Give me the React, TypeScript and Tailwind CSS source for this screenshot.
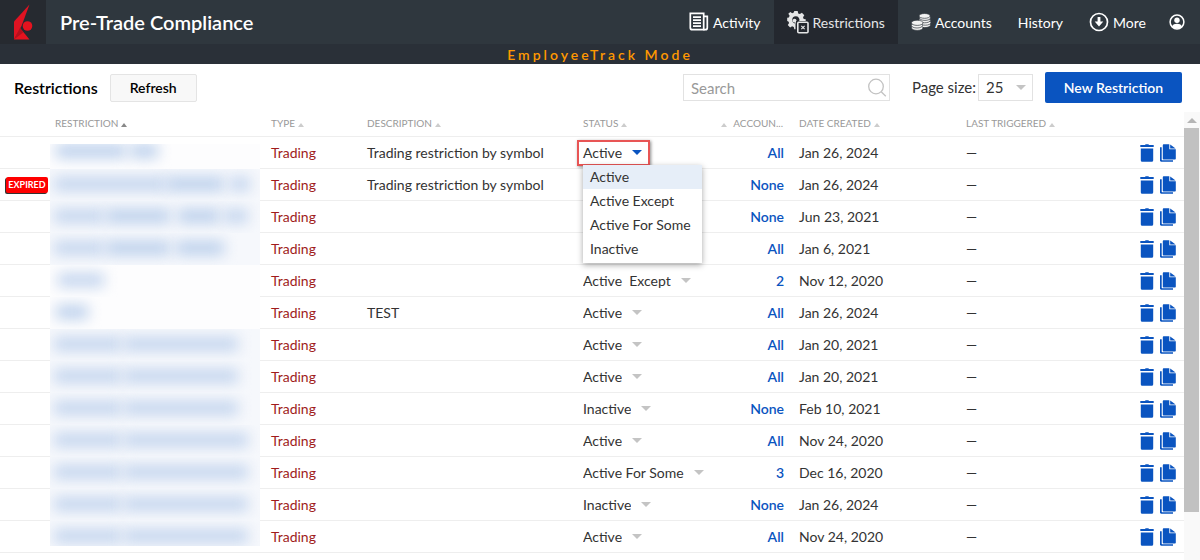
import type { ReactNode } from "react";

type Status = "Active" | "Active Except" | "Active\u00a0 Except" | "Active For Some" | "Inactive";

type Bar = { left: number; width: number; dark?: boolean };

type Restriction = {
  id: number;
  expired?: boolean;
  open?: boolean;
  sparse?: boolean;
  bars: Bar[];
  description: string;
  status: Status;
  accounts: string;
  created: string;
};

const statuses: Status[] = ["Active", "Active Except", "Active For Some", "Inactive"];

// restriction names are redacted, each one is drawn as a few blurred bars
const shortBars: Bar[] = [
  { left: 4, width: 68 },
  { left: 74, width: 114 },
];

const longBars: Bar[] = [
  { left: 4, width: 68 },
  { left: 74, width: 124 },
];

const rows: Restriction[] = [
  { id: 1, open: true, bars: [{ left: 6, width: 70, dark: true }, { left: 80, width: 28, dark: true }], description: "Trading restriction by symbol", status: "Active", accounts: "All", created: "Jan 26, 2024" },
  { id: 2, expired: true, bars: [{ left: 4, width: 112 }, { left: 116, width: 58, dark: true }, { left: 180, width: 20 }], description: "Trading restriction by symbol", status: "Active", accounts: "None", created: "Jan 26, 2024" },
  { id: 3, bars: [{ left: 4, width: 50 }, { left: 56, width: 64, dark: true }, { left: 128, width: 42, dark: true }, { left: 174, width: 24 }], description: "", status: "Active", accounts: "None", created: "Jun 23, 2021" },
  { id: 4, bars: [{ left: 4, width: 50 }, { left: 56, width: 64, dark: true }, { left: 126, width: 48, dark: true }], description: "", status: "Active", accounts: "All", created: "Jan 6, 2021" },
  { id: 5, sparse: true, bars: [{ left: 8, width: 46 }], description: "", status: "Active\u00a0 Except", accounts: "2", created: "Nov 12, 2020" },
  { id: 6, sparse: true, bars: [{ left: 6, width: 32, dark: true }], description: "TEST", status: "Active", accounts: "All", created: "Jan 26, 2024" },
  { id: 7, bars: shortBars, description: "", status: "Active", accounts: "All", created: "Jan 20, 2021" },
  { id: 8, bars: shortBars, description: "", status: "Active", accounts: "All", created: "Jan 20, 2021" },
  { id: 9, bars: shortBars, description: "", status: "Inactive", accounts: "None", created: "Feb 10, 2021" },
  { id: 10, bars: longBars, description: "", status: "Active", accounts: "All", created: "Nov 24, 2020" },
  { id: 11, bars: longBars, description: "", status: "Active For Some", accounts: "3", created: "Dec 16, 2020" },
  { id: 12, bars: longBars, description: "", status: "Inactive", accounts: "None", created: "Jan 26, 2024" },
  { id: 13, bars: longBars, description: "", status: "Active", accounts: "All", created: "Nov 24, 2020" },
];

function Logo() {
  return (
    <svg className="h-9 w-5" viewBox="0 0 20 36" aria-hidden="true">
      <path d="M16.500 0.500 1 17.500v18L8.500 22z" fill="#e01322" />
      <path d="M1 35.500 7 24 16.500 35.500z" fill="#e5131f" />
      <path d="M1 35.500 7 24 10.500 28.200z" fill="#b5101d" />
      <circle cx="14.500" cy="22" r="4.800" fill="#e5131f" />
    </svg>
  );
}

function NewsIcon() {
  return (
    <svg className="h-5 w-5" viewBox="0 0 20 20" fill="none" stroke="#fff" strokeWidth="1.700" aria-hidden="true">
      <path d="M1.300 1.300h13.400v16.400H3.300a2 2 0 0 1-2-2z" />
      <path d="M14.700 4.300h3.600v11.400a2 2 0 0 1-2 2h-2" />
      <path d="M4 5.200h8M4 8.200h8M4 11.200h8M4 14.200h8" />
    </svg>
  );
}

function GearIcon() {
  return (
    <svg className="h-6 w-[22px]" viewBox="0 0 22 24" aria-hidden="true">
      <path
        fill="#e4e5e6"
        fillRule="evenodd"
        d="M7.300 1h3.400l.5 2.400 1.700.7 2-1.300 2.400 2.400-1.300 2 .7 1.700 2 .4v1.700H9.500v-.6a1.900 1.900 0 1 0-1.900 2.100h.9v6.800l-1.200-.1-.5-2.300-1.700-.7-2 1.300L.8 15.100l1.300-2-.7-1.700L.200 11V7.700l1.700-.3.700-1.700-1.300-2L3.300 2l1.900 1.300 1.600-.7zM8.800 6.300a3.600 3.600 0 1 0 .2 7.200V11h3.300a3.600 3.600 0 0 0-3.500-4.700z"
      />
      <rect x="10.800" y="12.300" width="10.200" height="10.400" rx="1" fill="#24282f" stroke="#e4e5e6" strokeWidth="1.600" />
      <path d="m14.300 15.900 3.300 3.300m0-3.300-3.300 3.300" stroke="#e4e5e6" strokeWidth="1.200" />
    </svg>
  );
}

function CoinsIcon() {
  return (
    <svg className="h-[18px] w-5" viewBox="0 0 20 18" aria-hidden="true">
      <g fill="#f2f2f2" stroke="#2f373e" strokeWidth="0.700">
        <ellipse cx="13.800" cy="12" rx="5.800" ry="2.600" />
        <ellipse cx="14.300" cy="9.600" rx="5.600" ry="2.600" />
        <ellipse cx="13.600" cy="7.200" rx="5.800" ry="2.600" />
        <ellipse cx="14" cy="4.800" rx="5.600" ry="2.600" />
        <ellipse cx="13.600" cy="2.900" rx="5.600" ry="2.400" />
        <ellipse cx="6.200" cy="14.800" rx="5.800" ry="2.600" />
        <ellipse cx="6" cy="12.400" rx="5.600" ry="2.600" />
        <ellipse cx="6.200" cy="9.800" rx="5.800" ry="2.600" />
      </g>
    </svg>
  );
}

function DownCircleIcon() {
  return (
    <svg className="h-5 w-5" viewBox="0 0 20 20" aria-hidden="true">
      <circle cx="10" cy="10" r="8.500" fill="none" stroke="#fff" strokeWidth="1.700" />
      <path d="M8.600 5h2.800v4.600h2.900L10 14.600 5.700 9.600h2.900z" fill="#fff" />
    </svg>
  );
}

function UserIcon() {
  return (
    <svg className="h-4 w-4" viewBox="0 0 16 16" aria-hidden="true">
      <circle cx="8" cy="8" r="6.900" fill="none" stroke="#fff" strokeWidth="1.500" />
      <circle cx="8" cy="6.300" r="2.700" fill="#fff" />
      <path d="M3 12.400c.8-2 2.700-2.700 5-2.700s4.200.7 5 2.700A6.700 6.700 0 0 1 8 14.500a6.700 6.700 0 0 1-5-2.100z" fill="#fff" />
    </svg>
  );
}

function TrashIcon() {
  return (
    <svg className="h-[18px] w-[14px]" viewBox="0 0 14 18" fill="#0a54c0" aria-hidden="true">
      <path d="M5 1.100C5 .5 5.400.2 6 .2h2c.6 0 1 .3 1 .9h4.700v2H.3v-2z" />
      <path d="M.8 4.400h12.400v11.900c0 .9-.5 1.500-1.400 1.500H2.200c-.9 0-1.400-.6-1.400-1.500z" />
    </svg>
  );
}

function CopyIcon() {
  return (
    <svg className="h-[18px] w-4" viewBox="0 0 16 18" fill="#0a54c0" aria-hidden="true">
      <path d="M0 3.200h1.700v12.600c0 .3.200.5.500.5H13v1.500H1.200c-.8 0-1.200-.4-1.200-1.200z" />
      <path d="M3.900.2h5.400v5h6.500v9.300c0 .7-.4 1.100-1.100 1.100H3.900c-.7 0-1.100-.4-1.100-1.100V1.300C2.800.6 3.200.2 3.900.2z" />
      <path d="M10.200.4 15.600 4.400h-5.400z" />
    </svg>
  );
}

function Caret({ className }: { className: string }) {
  return (
    <svg className={`pointer-events-none h-[5px] w-[10px] ${className}`} viewBox="0 0 10 5" fill="currentColor" aria-hidden="true">
      <path d="M0 0h10L5 5z" />
    </svg>
  );
}

function SortCaret({ active }: { active?: boolean }) {
  return (
    <svg className={`mt-1 h-1 w-[6px] shrink-0 ${active ? "text-[#888]" : "text-[#ccc]"}`} viewBox="0 0 6 4" fill="currentColor" aria-hidden="true">
      <path d="M3 0 6 4H0z" />
    </svg>
  );
}

function NavItem({ label, icon, active }: { label: string; icon?: ReactNode; active?: boolean }) {
  return (
    <a
      href="#"
      className={`flex items-center gap-1 px-[13px] text-[14px] ${active ? "bg-[#24282f] text-[#e4e5e6]" : "text-white"}`}
    >
      {icon}
      {label}
    </a>
  );
}

function Header() {
  return (
    <header>
      <div className="flex h-11 bg-[#2f373e] text-white">
        <a href="#" aria-label="Home" className="flex w-[46px] items-center justify-center bg-[#262a30]">
          <Logo />
        </a>
        <h1 className="flex flex-1 items-center pl-[14px] text-[20px] font-semibold">Pre-Trade Compliance</h1>
        <nav className="flex">
          <NavItem label="Activity" icon={<NewsIcon />} />
          <NavItem label="Restrictions" icon={<GearIcon />} active />
          <NavItem label="Accounts" icon={<CoinsIcon />} />
          <NavItem label="History" />
          <NavItem label="More" icon={<DownCircleIcon />} />
          <a href="#" aria-label="Profile" className="flex items-center pr-[15px] pl-[10px]">
            <UserIcon />
          </a>
        </nav>
      </div>
      <div className="flex h-5 items-center justify-center bg-[#2a3038] text-[14px] font-semibold tracking-[3px] text-[#f90]">
        EmployeeTrack Mode
      </div>
    </header>
  );
}

function Toolbar() {
  return (
    <div className="flex items-center pt-2 pr-[18px] pl-[14px] text-[15px]">
      <h2 className="text-[16px] font-semibold text-black">Restrictions</h2>
      <button type="button" className="ml-3 h-7 w-[87px] rounded-xs border border-[#e4e4e4] bg-[#f8f8f8] text-[14px] font-semibold text-black">
        Refresh
      </button>
      <div className="flex-1" />
      <div className="relative">
        <input
          type="search"
          aria-label="Search"
          placeholder="Search"
          className="block h-[27px] w-[207px] border border-[#e2e2e2] bg-white pr-7 pl-[7px] placeholder:text-[#999]"
        />
        <svg className="pointer-events-none absolute top-1 right-[3px] h-5 w-5" viewBox="0 0 20 20" fill="none" stroke="#c2c2c2" strokeWidth="1.300" aria-hidden="true">
          <circle cx="9" cy="8.500" r="7.300" />
          <path d="m14.200 13.700 4.600 4.600" />
        </svg>
      </div>
      <label htmlFor="page-size" className="ml-[22px]">
        Page size:
      </label>
      <div className="relative ml-[2px]">
        <select id="page-size" defaultValue="25" className="block h-[27px] w-[55px] appearance-none border border-[#e2e2e2] bg-white pl-[7px]">
          <option>25</option>
          <option>50</option>
          <option>100</option>
        </select>
        <Caret className="absolute top-[11px] right-[7px] text-[#c4c4c4]" />
      </div>
      <button type="button" className="ml-3 h-[31px] w-[137px] rounded-xs bg-[#0a54c0] text-[14px] font-semibold text-white">
        New Restriction
      </button>
    </div>
  );
}

function HeadCell({ label, className, active, reverse }: { label: string; className: string; active?: boolean; reverse?: boolean }) {
  return (
    <th scope="col" className={`border-b border-[#eee] pt-[7px] pb-0 font-normal whitespace-nowrap ${className}`}>
      <div className={`flex items-center ${reverse ? "flex-row-reverse gap-[6px]" : "gap-[3px]"}`}>
        <span>{label}</span>
        <SortCaret active={active} />
      </div>
    </th>
  );
}

function StatusMenu({ status }: { status: Status }) {
  return (
    <div className="relative -ml-[6px] w-fit">
      <button
        type="button"
        aria-haspopup="listbox"
        aria-expanded="true"
        className="flex h-[26px] w-[73px] items-center justify-between border-2 border-[#e85555] pr-[6px] pl-1 shadow-[1px_1px_3px_rgba(0,0,0,0.45)]"
      >
        {status}
        <Caret className="text-[#0a54c0]" />
      </button>
      <ul role="listbox" aria-label="Status" className="absolute top-[25px] left-[6px] z-10 w-[119px] bg-white pb-[2px] shadow-[0_2px_6px_rgba(0,0,0,0.35)]">
        {statuses.map((s) => (
          <li
            key={s}
            role="option"
            aria-selected={s === status}
            className="flex h-6 items-center pl-[7px] whitespace-nowrap aria-selected:bg-[#e6eef8]"
          >
            {s}
          </li>
        ))}
      </ul>
    </div>
  );
}

function StatusSelect({ status }: { status: Status }) {
  return (
    <div className="relative w-fit">
      <select aria-label="Status" defaultValue={status} className="field-sizing-content block appearance-none pr-5">
        {statuses.map((s) => (
          <option key={s}>{s}</option>
        ))}
        {!statuses.includes(status) && <option>{status}</option>}
      </select>
      <Caret className="absolute top-2 right-0 text-[#c4c4c4]" />
    </div>
  );
}

function RestrictionRow({ row, first, last }: { row: Restriction; first: boolean; last: boolean }) {
  const cell = "border-b border-[#eee] py-0 pr-1 pl-[11px] whitespace-nowrap";
  return (
    <tr className="h-8">
      <td className="border-b border-[#eee] p-0 pl-[6px]">
        {row.expired && (
          <span className="flex h-4 w-[42px] items-center justify-center rounded-xs bg-[#f00] text-[9px] font-bold text-white shadow-[-1px_1px_0_#333]">
            EXPIRED
          </span>
        )}
      </td>
      <td className={`h-8 p-0 ${first ? "pt-[7px]" : ""} ${last ? "border-b border-[#eee] pb-[6px]" : ""}`}>
        <div className={`relative h-full overflow-hidden ${row.sparse || first ? "bg-[#fdfdfe]" : "bg-[#f6f8fc]"}`}>
          {row.bars.map((bar, i) => (
            <span
              key={i}
              className={`absolute h-[14px] blur-[7px] ${first ? "top-0" : "top-2"} ${bar.dark ? "bg-[#bcd0ec]" : "bg-[#c4d5ee]"}`}
              style={{ left: bar.left, width: bar.width }}
            />
          ))}
        </div>
      </td>
      <td className={`${cell} text-[#a01c1c]`}>Trading</td>
      <td className={cell}>{row.description}</td>
      <td className={cell}>{row.open ? <StatusMenu status={row.status} /> : <StatusSelect status={row.status} />}</td>
      <td className={`${cell} text-right`}>
        <a href="#" className="font-semibold text-[#0a54c0]">
          {row.accounts}
        </a>
      </td>
      <td className={cell}>{row.created}</td>
      <td className={cell}>—</td>
      <td className="border-b border-[#eee] p-0 pr-2">
        <div className="flex items-center justify-end gap-[6px]">
          <button type="button" aria-label="Delete">
            <TrashIcon />
          </button>
          <button type="button" aria-label="Copy">
            <CopyIcon />
          </button>
        </div>
      </td>
    </tr>
  );
}

function RestrictionTable() {
  return (
    <table className="w-full table-fixed border-separate border-spacing-0 text-left text-[14px]">
      <colgroup>
        <col className="w-[50px]" />
        <col className="w-[210px]" />
        <col className="w-[96px]" />
        <col className="w-[216px]" />
        <col className="w-[140px]" />
        <col className="w-[76px]" />
        <col className="w-[167px]" />
        <col />
        <col className="w-[60px]" />
      </colgroup>
      <thead className="text-[10px] text-[#999] uppercase">
        <tr className="h-[34px]">
          <td className="border-b border-[#eee] p-0" />
          <HeadCell label="Restriction" className="pl-[5px]" active />
          <HeadCell label="Type" className="pl-[11px]" />
          <HeadCell label="Description" className="pl-[11px]" />
          <HeadCell label="Status" className="pl-[11px]" />
          <HeadCell label="Accoun..." className="pr-[5px]" reverse />
          <HeadCell label="Date Created" className="pl-[11px]" />
          <HeadCell label="Last Triggered" className="pl-[11px]" />
          <td className="border-b border-[#eee] p-0" />
        </tr>
      </thead>
      <tbody>
        {rows.map((row, i) => (
          <RestrictionRow key={row.id} row={row} first={i === 0} last={i === rows.length - 1} />
        ))}
      </tbody>
    </table>
  );
}

function ScrollTrack() {
  return (
    <div className="mt-[9px] flex w-4 shrink-0 flex-col bg-[#f9f9f9]" aria-hidden="true">
      <div className="flex h-4 items-center justify-center">
        <Caret className="rotate-180 text-[#b5b5b5]" />
      </div>
      <div className="mr-px flex-8 bg-[#c1c1c1]" />
      <div className="flex-1" />
    </div>
  );
}

export default function App() {
  return (
    <div className="flex min-h-screen flex-col bg-white font-[Lato,sans-serif] text-[#333]">
      <Header />
      <main className="flex flex-1 flex-col">
        <Toolbar />
        <div className="flex flex-1">
          <div className="min-w-0 flex-1">
            <RestrictionTable />
          </div>
          <ScrollTrack />
        </div>
      </main>
    </div>
  );
}
